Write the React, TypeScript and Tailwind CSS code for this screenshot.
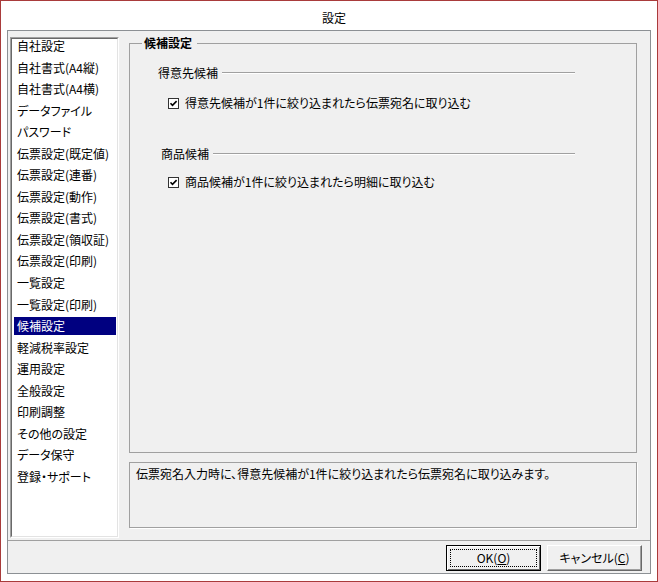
import React from 'react';

const items = [
  '自社設定',
  '自社書式(A4縦)',
  '自社書式(A4横)',
  'データファイル',
  'パスワード',
  '伝票設定(既定値)',
  '伝票設定(連番)',
  '伝票設定(動作)',
  '伝票設定(書式)',
  '伝票設定(領収証)',
  '伝票設定(印刷)',
  '一覧設定',
  '一覧設定(印刷)',
  '候補設定',
  '軽減税率設定',
  '運用設定',
  '全般設定',
  '印刷調整',
  'その他の設定',
  'データ保守',
  '登録・サポート',
];

function CheckBox() {
  return (
    <svg width="11" height="11" viewBox="0 0 11 11" className="flex-none">
      <rect x="0.5" y="0.5" width="10" height="10" fill="#fff" stroke="#333" />
      <polyline points="2.5,5.2 4.5,7.3 8.6,3.1" fill="none" stroke="#000" strokeWidth="1.6" />
    </svg>
  );
}

function SubHeader({ label, pl }: { label: string; pl: string }) {
  return (
    <div className={`flex items-center h-[14px] pr-[61px] ${pl}`}>
      <span className="leading-[14px] whitespace-nowrap">{label}</span>
      <div className="flex-1 ml-[4px] flex flex-col">
        <div className="h-px bg-[#a0a0a0]" />
        <div className="h-px bg-white" />
      </div>
    </div>
  );
}

export default function App() {
  return (
    <div className="w-[658px] h-[582px] border border-[#a93b3b] bg-white flex flex-col text-[12px] text-black font-['Noto_Sans_CJK_JP','Noto_Sans',sans-serif] [font-feature-settings:'palt']">
      {/* title bar */}
      <div className="h-[29px] flex items-center justify-center pt-[4px] pl-[10px] leading-[14px]">設定</div>

      {/* main panel */}
      <div className="ml-[6px] w-[644px] h-[544px] border border-[#8c9094] bg-[#f0f0f0] flex flex-col">
        <div className="h-[509px] flex flex-row pl-[2px]">
          {/* list box */}
          <div className="mt-[6px] w-[109px] h-[501px] border border-t-[#a0a0a0] border-l-[#a0a0a0] border-r-white border-b-white flex">
            <div className="flex-1 border border-t-[#696969] border-l-[#696969] border-r-[#e3e3e3] border-b-[#e3e3e3] bg-white overflow-hidden">
              <div className="mt-[-2px] pl-[2px] pr-[1px]">
                {items.map((it) => {
                  const sel = it === '候補設定';
                  return (
                    <div key={it} className="h-[21.55px]">
                      <div
                        className={`h-[18px] flex items-center pl-[3px] leading-[18px] whitespace-nowrap ${
                          sel ? 'bg-[#000080] text-white' : ''
                        }`}
                      >
                        {it}
                      </div>
                    </div>
                  );
                })}
              </div>
            </div>
          </div>

          {/* right column */}
          <div className="ml-[10px] w-[508px] flex flex-col">
            <fieldset className="mt-[5px] h-[417px] border border-[#a0a0a0] flex flex-col">
              <legend className="ml-[12px] pl-[2px] pr-[5px] leading-[14px] font-bold">候補設定</legend>
              <div className="flex flex-col">
                <div className="mt-[16px]">
                  <SubHeader label="得意先候補" pl="pl-[28px]" />
                </div>
                <div className="mt-[16px] h-[14px] flex items-center pl-[38px] gap-[6px]">
                  <CheckBox />
                  <span className="leading-[14px] whitespace-nowrap">得意先候補が1件に絞り込まれたら伝票宛名に取り込む</span>
                </div>
                <div className="mt-[37px]">
                  <SubHeader label="商品候補" pl="pl-[31px]" />
                </div>
                <div className="mt-[14px] h-[14px] flex items-center pl-[38px] gap-[6px]">
                  <CheckBox />
                  <span className="leading-[14px] whitespace-nowrap">商品候補が1件に絞り込まれたら明細に取り込む</span>
                </div>
              </div>
            </fieldset>

            <div className="mt-[9px] h-[66px] border border-[#a0a0a0] shadow-[1px_1px_0_#ffffff] pt-[4px] px-[6px] leading-[14px]">
              伝票宛名入力時に、得意先候補が1件に絞り込まれたら伝票宛名に取り込みます。
            </div>
          </div>
        </div>

        {/* divider */}
        <div className="h-px bg-[#a0a0a0]" />

        {/* buttons */}
        <div className="h-[32px] flex justify-end items-start pt-[4px] pr-[8px] gap-[6px]">
          <div className="w-[95px] h-[26px] border border-black bg-[#f0f0f0] flex shadow-[inset_1px_1px_0_#ffffff,inset_-1px_-1px_0_#696969]">
            <div className="flex-1 m-[3px] border border-dotted border-black flex items-center justify-center leading-[14px]">
              OK(<span className="underline">O</span>)
            </div>
          </div>
          <div className="w-[95px] h-[26px] border border-t-white border-l-white border-r-[#696969] border-b-[#696969] bg-[#f0f0f0] flex items-center justify-center leading-[14px] shadow-[inset_-1px_-1px_0_#a0a0a0]">
            キャンセル(<span className="underline">C</span>)
          </div>
        </div>
      </div>
    </div>
  );
}
